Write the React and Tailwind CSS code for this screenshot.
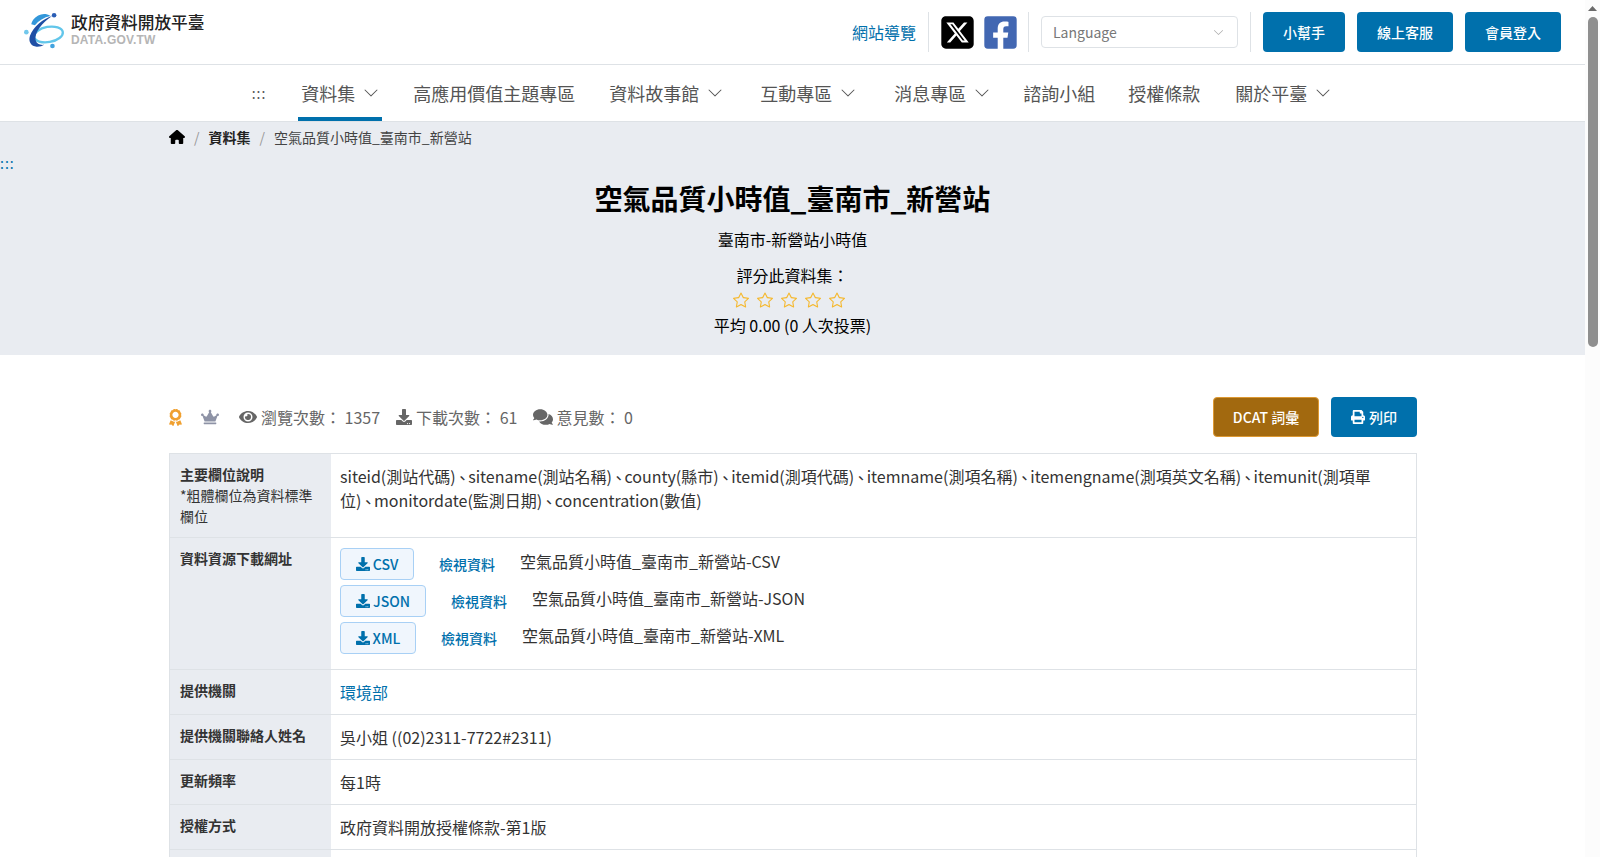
import { BsChevronDown, BsStar } from 'react-icons/bs'
import { FaAward, FaComments, FaCrown, FaDownload, FaEye, FaFacebookSquare, FaPrint } from 'react-icons/fa'
import { FaHouse, FaSquareXTwitter } from 'react-icons/fa6'

const navItems = [
  { label: '資料集', caret: true, active: true, gap: 'mr-[14px]' },
  { label: '高應用價值主題專區', gap: 'mr-[14px]' },
  { label: '資料故事館', caret: true, gap: 'mr-[17px]' },
  { label: '互動專區', caret: true, gap: 'mr-[18px]' },
  { label: '消息專區', caret: true, gap: 'mr-[13px]' },
  { label: '諮詢小組', gap: 'mr-[13px]' },
  { label: '授權條款', gap: 'mr-[15px]' },
  { label: '關於平臺', caret: true, gap: 'mr-[18px]' },
]

const downloads = [
  { type: 'CSV', w: 'w-[74px]' },
  { type: 'JSON', w: 'w-[86px]' },
  { type: 'XML', w: 'w-[76px]' },
]

// the reference breaks inside itemunit, so the two lines are kept apart
const fieldLines = [
  ['siteid(測站代碼)', 'sitename(測站名稱)', 'county(縣市)', 'itemid(測項代碼)', 'itemname(測項名稱)', 'itemengname(測項英文名稱)', 'itemunit(測項單'],
  ['位)', 'monitordate(監測日期)', 'concentration(數值)'],
]

function Logo() {
  return (
    <svg width="43" height="38" viewBox="12 12 130 115" className="mt-[2px] shrink-0">
      <ellipse cx="86" cy="80" rx="44" ry="23" fill="none" stroke="#62c6ea" strokeWidth="7" transform="rotate(-10 86 80)" />
      <path d="M97 24C70 32 40 56 30 84c-6 18 4 32 20 33 9 .5 17-2 23-6-12 2-23-2-26-14-5-22 22-55 50-73Z" fill="#1f4fa5" />
      <path d="M92 24C74 12 52 20 41 34c-4 5-6 10-7 15l11 3c11-14 27-24 47-28Z" fill="#3397da" />
      <circle cx="103" cy="22" r="7" fill="#2a5db5" />
      <circle cx="19" cy="73" r="7" fill="#72c8ec" />
      <circle cx="98" cy="115" r="7" fill="#42a3df" />
    </svg>
  )
}

function Row({ label, note, children, className = '' }) {
  return (
    <div className={`flex border-b border-[#dee2e6] ${className}`}>
      <div className="w-[161px] shrink-0 bg-[#e9ecf1] px-[10px] py-[10px] text-[14px] leading-[21px] text-[#333]">
        <div className="font-bold">{label}</div>
        {note && <div>{note}</div>}
      </div>
      <div className="flex-1 py-[10px] pl-[9px] pr-[10px] text-[16px] leading-[24px] text-[#333]">{children}</div>
    </div>
  )
}

export default function App() {
  return (
    <div lang="zh-Hant" className="flex h-[857px] w-[1600px] overflow-hidden bg-white font-['Noto_Sans_CJK_TC','Noto_Sans',sans-serif]">
      <div className="w-[1585px] shrink-0">
        {/* top bar */}
        <header className="flex h-[65px] items-center border-b border-[#dee2e6] pl-[24px] pr-[24px]">
          <div className="-mt-[5px] flex items-center gap-[4px]">
            <Logo />
            <div className="-mt-[1px] leading-none">
              <div className="text-[16.7px] leading-[20px] font-medium text-[#222]">政府資料開放平臺</div>
              <div className="mt-[2px] font-['Liberation_Sans',sans-serif] text-[12px] leading-[13px] font-bold tracking-[0.2px] text-[#b5b5b5]">DATA.GOV.TW</div>
            </div>
          </div>
          <div className="ml-auto flex items-center">
            <a className="mr-[12px] text-[16px] text-[#0070ac]">網站導覽</a>
            <div className="h-[40px] w-px bg-[#dee2e6]" />
            <FaSquareXTwitter className="ml-[10px] text-[37px] text-black" />
            <FaFacebookSquare className="ml-[6px] text-[37px] text-[#4267b2]" />
            <div className="ml-[9px] h-[40px] w-px bg-[#dee2e6]" />
            <div className="ml-[12px] flex h-[32px] w-[197px] items-center justify-between rounded-[4px] border border-[#dee2e6] pl-[11px] pr-[13px] text-[14px] text-[#777]">
              Language
              <BsChevronDown className="text-[11px] text-[#aaa]" />
            </div>
            <div className="ml-[12px] h-[40px] w-px bg-[#dee2e6]" />
            <button className="ml-[12px] h-[40px] w-[82px] rounded-[4px] bg-[#0070ac] text-[14px] font-medium text-white">小幫手</button>
            <button className="ml-[12px] h-[40px] w-[96px] rounded-[4px] bg-[#0070ac] text-[14px] font-medium text-white">線上客服</button>
            <button className="ml-[12px] h-[40px] w-[96px] rounded-[4px] bg-[#0070ac] text-[14px] font-medium text-white">會員登入</button>
          </div>
        </header>

        {/* main nav */}
        <nav className="flex h-[57px] items-stretch justify-center border-b border-[#dee2e6] pl-[19px] text-[18px] text-[#555]">
          <span className="mr-[18px] flex items-center text-[14px] tracking-[1px] text-[#555]">:::</span>
          {navItems.map(item => (
            <a key={item.label} className={`ml-[14px] flex items-center gap-[8px] border-b-4 px-[3px] pt-[4px] ${item.gap} ${item.active ? 'border-[#0070ac]' : 'border-transparent'}`}>
              {item.label}
              {item.caret && <BsChevronDown className="text-[16px]" />}
            </a>
          ))}
        </nav>

        {/* title band */}
        <section className="h-[233px] bg-[#e9ecf1] text-center text-black">
          <div className="ml-[169px] flex h-[30px] items-center text-[14px] text-[#444]">
            <FaHouse className="text-[16px] text-black" />
            <span className="ml-[9px] text-[#999]">/</span>
            <a className="ml-[9px] font-bold text-[#222]">資料集</a>
            <span className="ml-[9px] text-[#999]">/</span>
            <span className="ml-[9px]">空氣品質小時值_臺南市_新營站</span>
          </div>
          <div className="h-[22px] text-left text-[14px] leading-[22px] tracking-[1px] text-[#0070ac]">:::</div>
          <h1 className="mt-[3px] text-[28px] leading-[42px] font-bold">空氣品質小時值_臺南市_新營站</h1>
          <p className="mt-[8px] text-[16px] leading-[24px]">臺南市-新營站小時值</p>
          <p className="mt-[12px] text-[16px] leading-[24px]">評分此資料集：</p>
          <div className="mt-[1px] mr-[8px] flex h-[24px] items-center justify-center gap-[8px] text-[16px] text-[#f5b82e]">
            <BsStar /><BsStar /><BsStar /><BsStar /><BsStar />
          </div>
          <p className="mt-[1px] text-[16px] leading-[24px]">平均 0.00 (0 人次投票)</p>
        </section>

        <main className="mx-[169px] mt-[42px] w-[1248px]">
          {/* stats */}
          <div className="flex h-[40px] items-center text-[16px] text-[#666]">
            <FaAward className="-ml-[2px] text-[17px] text-[#f0a030]" />
            <FaCrown className="ml-[17px] text-[18px] text-[#8e93a6]" />
            <FaEye className="ml-[20px] mr-[4px] text-[18px]" />
            <span>瀏覽次數： 1357</span>
            <FaDownload className="ml-[16px] mr-[4px] text-[16px]" />
            <span>下載次數： 61</span>
            <FaComments className="ml-[16px] mr-[3px] text-[20px]" />
            <span>意見數： 0</span>
            <button className="ml-auto h-[40px] w-[106px] rounded-[4px] border border-[#dd9933] bg-[#a2690f] text-[14px] font-medium text-white">DCAT 詞彙</button>
            <button className="ml-[12px] flex h-[40px] w-[86px] items-center justify-center gap-[4px] rounded-[4px] bg-[#0070ac] text-[14px] font-medium text-white">
              <FaPrint className="text-[14px]" />列印
            </button>
          </div>

          {/* detail table */}
          <div className="mt-[16px] border-x border-t border-[#dee2e6]">
            <Row label="主要欄位說明" note="*粗體欄位為資料標準欄位" className="h-[84px]">
              {fieldLines.map(line => (
                <div key={line[0]} className="whitespace-nowrap">
                  {line.map((f, i) => (
                    <span key={f}>
                      {i > 0 && <span className="inline-block w-[12.5px] pl-[4px] align-[4px] leading-none">､</span>}
                      {f}
                    </span>
                  ))}
                </div>
              ))}
            </Row>
            <Row label="資料資源下載網址" className="h-[132px]">
              <div className="flex flex-col gap-[5px]">
                {downloads.map(d => (
                  <div key={d.type} className="flex items-center">
                    <button className={`flex h-[32px] items-center justify-center gap-[3px] rounded-[4px] border border-[#a8d0f5] bg-[#f0f6fd] text-[14px] font-medium text-[#0070ac] ${d.w}`}>
                      <FaDownload className="text-[14px]" />{d.type}
                    </button>
                    <a className="ml-[25px] text-[14px] font-medium text-[#0070ac]">檢視資料</a>
                    <span className="ml-[25px] -mt-[6px]">空氣品質小時值_臺南市_新營站-{d.type}</span>
                  </div>
                ))}
              </div>
            </Row>
            <Row label="提供機關" className="h-[45px]"><a className="text-[#0070ac]">環境部</a></Row>
            <Row label="提供機關聯絡人姓名" className="h-[45px]">吳小姐 ((02)2311-7722#2311)</Row>
            <Row label="更新頻率" className="h-[45px]">每1時</Row>
            <Row label="授權方式" className="h-[45px]">政府資料開放授權條款-第1版</Row>
            <Row label="" className="h-[45px]" />
          </div>
        </main>
      </div>

      {/* page scrollbar */}
      <div className="flex w-[15px] shrink-0 flex-col items-center bg-[#fcfcfc]">
        <svg width="9" height="5" viewBox="0 0 9 5" className="mt-[6px]"><path d="M4.5 0 9 5H0Z" fill="#6a6a6a" /></svg>
        <div className="mt-[6px] h-[330px] w-[10px] rounded-full bg-[#8f8f8f]" />
      </div>
    </div>
  )
}
